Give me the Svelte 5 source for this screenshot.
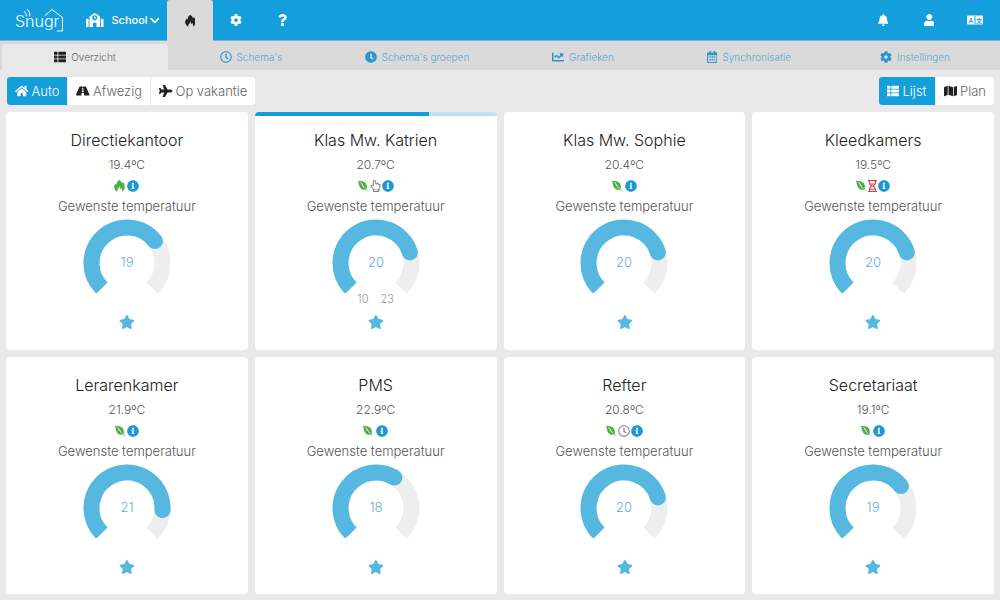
<script>
  const icons = {
    star: [576, 'M259.3 17.8L194 150.2 47.9 171.5c-26.2 3.8-36.7 36.1-17.7 54.6l105.7 103-25 145.5c-4.5 26.3 23.2 46 46.4 33.7L288 439.6l130.7 68.7c23.2 12.2 50.9-7.4 46.4-33.7l-25-145.5 105.7-103c19-18.5 8.5-50.8-17.7-54.6L382 150.2 316.7 17.8c-11.7-23.6-45.6-23.9-57.4 0z'],
    info: [512, 'M256 8C119.043 8 8 119.083 8 256c0 136.997 111.043 248 248 248s248-111.003 248-248C504 119.083 392.957 8 256 8zm0 110c23.196 0 42 18.804 42 42s-18.804 42-42 42-42-18.804-42-42 18.804-42 42-42zm56 254c0 6.627-5.373 12-12 12h-88c-6.627 0-12-5.373-12-12v-24c0-6.627 5.373-12 12-12h12v-64h-12c-6.627 0-12-5.373-12-12v-24c0-6.627 5.373-12 12-12h64c6.627 0 12 5.373 12 12v100h12c6.627 0 12 5.373 12 12v24z'],
    cog: [512, 'M487.4 315.7l-42.6-24.6c4.3-23.2 4.3-47 0-70.2l42.6-24.6c4.9-2.8 7.1-8.6 5.5-14-11.1-35.6-30-67.8-54.7-94.6-3.8-4.1-10-5.1-14.8-2.3L380.8 110c-17.9-15.4-38.5-27.3-60.8-35.1V25.8c0-5.6-3.9-10.5-9.4-11.7-36.7-8.2-74.3-7.8-109.2 0-5.5 1.2-9.4 6.1-9.4 11.7V75c-22.2 7.9-42.8 19.8-60.8 35.1L88.7 85.5c-4.9-2.8-11-1.9-14.8 2.3-24.7 26.7-43.6 58.9-54.7 94.6-1.7 5.4.6 11.2 5.5 14L67.3 221c-4.3 23.2-4.3 47 0 70.2l-42.6 24.6c-4.9 2.8-7.1 8.6-5.5 14 11.1 35.6 30 67.8 54.7 94.6 3.8 4.1 10 5.1 14.8 2.3l42.6-24.6c17.9 15.4 38.5 27.3 60.8 35.1v49.2c0 5.6 3.9 10.5 9.4 11.7 36.7 8.2 74.3 7.8 109.2 0 5.5-1.2 9.4-6.1 9.4-11.7v-49.2c22.2-7.9 42.8-19.8 60.8-35.1l42.6 24.6c4.9 2.8 11 1.9 14.8-2.3 24.7-26.7 43.6-58.9 54.7-94.6 1.5-5.5-.7-11.3-5.6-14.1zM256 336c-44.1 0-80-35.9-80-80s35.9-80 80-80 80 35.9 80 80-35.9 80-80 80z'],
    question: [384, 'M202.021 0C122.202 0 70.503 32.703 29.914 91.026c-7.363 10.58-5.093 25.086 5.178 32.874l43.138 32.709c10.373 7.865 25.132 6.026 33.253-4.148 25.049-31.381 43.63-49.449 82.757-49.449 30.764 0 68.816 19.799 68.816 49.631 0 22.552-18.617 34.134-48.993 51.164-35.423 19.86-82.299 44.576-82.299 106.405V320c0 13.255 10.745 24 24 24h72.471c13.255 0 24-10.745 24-24v-5.773c0-42.86 125.268-44.645 125.268-160.627C377.504 66.256 286.902 0 202.021 0zM192 373.459c-38.196 0-69.271 31.075-69.271 69.271 0 38.195 31.075 69.27 69.271 69.27s69.271-31.075 69.271-69.271-31.075-69.27-69.271-69.27z'],
    bell: [448, 'M224 512c35.32 0 63.97-28.65 63.97-64H160.03c0 35.35 28.65 64 63.97 64zm215.39-149.71c-19.32-20.76-55.47-51.99-55.47-154.29 0-77.7-54.48-139.9-127.94-155.16V32c0-17.67-14.32-32-31.98-32s-31.98 14.33-31.98 32v20.84C118.56 68.1 64.08 130.3 64.08 208c0 102.3-36.15 133.53-55.47 154.29-6 6.45-8.66 14.16-8.61 21.71.11 16.4 12.98 32 32.1 32h383.8c19.12 0 32-15.6 32.1-32 .05-7.55-2.61-15.27-8.61-21.71z'],
    user: [448, 'M224 256c70.7 0 128-57.3 128-128S294.7 0 224 0 96 57.3 96 128s57.3 128 128 128zm89.6 32h-16.7c-22.2 10.2-46.9 16-72.9 16s-50.6-5.8-72.9-16h-16.7C60.2 288 0 348.2 0 422.4V464c0 26.5 21.5 48 48 48h352c26.5 0 48-21.5 48-48v-41.6c0-74.2-60.2-134.4-134.4-134.4z'],
    clock: [512, 'M256 8C119 8 8 119 8 256s111 248 248 248 248-111 248-248S393 8 256 8zm0 448c-110.5 0-200-89.5-200-200S145.5 56 256 56s200 89.5 200 200-89.5 200-200 200zm61.8-104.4l-84.9-61.7c-3.1-2.3-4.9-5.9-4.9-9.7V116c0-6.6 5.4-12 12-12h32c6.6 0 12 5.4 12 12v141.7l66.8 48.6c5.4 3.9 6.5 11.4 2.6 16.8L334.6 349c-3.9 5.3-11.4 6.5-16.8 2.6z'],
    clockSolid: [512, 'M256,8C119,8,8,119,8,256S119,504,256,504,504,393,504,256,393,8,256,8Zm57.1,350.1L224.9,294c-3.1-2.3-4.9-5.9-4.9-9.7V116a12,12,0,0,1,12-12h48a12,12,0,0,1,12,12V250.7l62.3,45.3a12,12,0,0,1,2.6,16.8l-28.2,38.8A12,12,0,0,1,313.1,358.1Z'],
    chart: [512, 'M496 384H64V80c0-8.84-7.16-16-16-16H16C7.16 64 0 71.16 0 80v336c0 17.67 14.33 32 32 32h464c8.84 0 16-7.16 16-16v-32c0-8.84-7.16-16-16-16zM464 96H345.94c-21.38 0-32.09 25.85-16.97 40.97l32.4 32.4L288 242.75l-73.37-73.37c-12.5-12.5-32.76-12.5-45.25 0l-68.69 68.69c-6.25 6.25-6.25 16.38 0 22.63l22.62 22.62c6.25 6.25 16.38 6.25 22.63 0L192 237.25l73.37 73.37c12.5 12.5 32.76 12.5 45.25 0l96-96 32.4 32.4c15.12 15.12 40.97 4.41 40.97-16.97V112c.01-8.84-7.15-16-15.99-16z'],
    list: [512, 'M149.333 216v80c0 13.255-10.745 24-24 24H24c-13.255 0-24-10.745-24-24v-80c0-13.255 10.745-24 24-24h101.333c13.255 0 24 10.745 24 24zM0 376v80c0 13.255 10.745 24 24 24h101.333c13.255 0 24-10.745 24-24v-80c0-13.255-10.745-24-24-24H24c-13.255 0-24 10.745-24 24zM125.333 32H24C10.745 32 0 42.745 0 56v80c0 13.255 10.745 24 24 24h101.333c13.255 0 24-10.745 24-24V56c0-13.255-10.745-24-24-24zm80 448H488c13.255 0 24-10.745 24-24v-80c0-13.255-10.745-24-24-24H205.333c-13.255 0-24 10.745-24 24v80c0 13.255 10.745 24 24 24zm-24-424v80c0 13.255 10.745 24 24 24H488c13.255 0 24-10.745 24-24V56c0-13.255-10.745-24-24-24H205.333c-13.255 0-24 10.745-24 24zm24 264H488c13.255 0 24-10.745 24-24v-80c0-13.255-10.745-24-24-24H205.333c-13.255 0-24 10.745-24 24v80c0 13.255 10.745 24 24 24z'],
    home: [576, 'M280.37 148.26L96 300.11V464a16 16 0 0 0 16 16l112.06-.29a16 16 0 0 0 15.92-16V368a16 16 0 0 1 16-16h64a16 16 0 0 1 16 16v95.64a16 16 0 0 0 16 16.05L464 480a16 16 0 0 0 16-16V300L295.67 148.26a12.19 12.19 0 0 0-15.3 0zM571.6 251.47L488 182.56V44.05a12 12 0 0 0-12-12h-56a12 12 0 0 0-12 12v72.61L318.47 43a48 48 0 0 0-61 0L4.34 251.47a12 12 0 0 0-1.6 16.9l25.5 31A12 12 0 0 0 45.15 301l235.22-193.74a12.19 12.19 0 0 1 15.3 0L530.9 301a12 12 0 0 0 16.9-1.6l25.5-31a12 12 0 0 0-1.7-16.93z'],
    road: [576, 'M573.19 402.67l-139.79-320C428.43 71.29 417.6 64 405.68 64h-97.59l2.45 23.16c.5 4.72-3.21 8.84-7.96 8.84h-29.16c-4.75 0-8.46-4.12-7.96-8.84L267.91 64h-97.59c-11.93 0-22.76 7.29-27.73 18.67L2.8 402.67C-6.45 423.86 8.31 448 30.54 448h196.84l10.31-97.68c.86-8.14 7.72-14.32 15.91-14.32h68.8c8.19 0 15.05 6.18 15.91 14.32L348.62 448h196.84c22.23 0 36.99-24.14 27.73-45.33zM260.4 135.16a8 8 0 0 1 7.96-7.16h39.29c4.09 0 7.53 3.09 7.96 7.16l4.6 43.58c.75 7.09-4.81 13.26-11.93 13.26h-40.54c-7.13 0-12.68-6.17-11.93-13.26l4.59-43.58zM315.64 304h-55.29c-9.5 0-16.91-8.23-15.91-17.68l5.07-48c.86-8.14 7.72-14.32 15.91-14.32h45.15c8.19 0 15.05 6.18 15.91 14.32l5.07 48c1 9.45-6.41 17.68-15.91 17.68z'],
    plane: [576, 'M480 192H365.71L260.61 8.06A16.014 16.014 0 0 0 246.71 0h-65.5c-10.63 0-18.3 10.17-15.38 20.39L214.86 192H112l-43.2-57.6c-3.02-4.03-7.77-6.4-12.8-6.4H16.01C5.6 128-2.04 137.78.49 147.88L32 256 .49 364.12C-2.04 374.22 5.6 384 16.01 384H56c5.04 0 9.78-2.37 12.8-6.4L112 320h102.86l-49.03 171.6c-2.92 10.22 4.75 20.4 15.38 20.4h65.5c5.74 0 11.04-3.08 13.89-8.06L365.71 320H480c35.35 0 96-28.65 96-64s-60.65-64-96-64z'],
    map: [576, 'M0 117.66v346.32c0 11.32 11.43 19.06 21.94 14.86L160 416V32L20.12 87.95A32.006 32.006 0 0 0 0 117.66zM192 416l192 64V96L192 32v384zM554.06 33.16L416 96v384l139.88-55.95A31.996 31.996 0 0 0 576 394.34V48.02c0-11.32-11.43-19.06-21.94-14.86z'],
    chevron: [448, 'M207.029 381.476L12.686 187.132c-9.373-9.373-9.373-24.569 0-33.941l22.667-22.667c9.357-9.357 24.522-9.375 33.901-.04L224 284.505l154.745-154.021c9.379-9.335 24.544-9.317 33.901.04l22.667 22.667c9.373 9.373 9.373 24.569 0 33.941L240.971 381.476c-9.373 9.372-24.569 9.372-33.942 0z'],
    leaf: [448, 'M0 32c477.6 0 366.6 317.3 367.1 366.3L448 480h-26l-70.4-71.2c-39 4.2-124.4 34.5-214.4-37C47 300.3 52 214.7 0 32zm79.7 46c-49.7-23.5-5.2 9.2-5.2 9.2 45.2 31.2 66 73.7 90.2 119.9 31.5 60.2 79 139.7 144.2 167.7 65 28 34.2 12.5 6-8.5-28.2-21.2-68.2-87-91-130.2-31.7-60-61-118.6-144.2-158.1z'],
    flame: [464, 'M212 4c70 20 116 66 122 134 22-6 38-22 44-50 50 54 82 124 82 206 0 88-46 158-120 202 18-54 6-108-26-150-10 26-28 40-52 44 8-46-8-84-42-112-2 58-26 84-56 116-26 28-32 62-18 102C60 456 8 388 8 306c0-70 30-112 80-152 8 24 16 34 30 42C114 116 140 44 212 4z'],
    school: [640, 'M0 240c0-18 14-32 32-32h64v304H16c-9 0-16-7-16-16V240zm544-32h64c18 0 32 14 32 32v256c0 9-7 16-16 16h-80V208zM500 118L338 10c-11-7-25-7-36 0L140 118c-8 6-12 14-12 26v368h128V368c0-9 7-16 16-16h96c9 0 16 7 16 16v144h128V144c0-12-4-20-12-26zM320 272c-53 0-96-43-96-96s43-96 96-96 96 43 96 96-43 96-96 96zm-20-148h40v40h34v34h-74v-74z'],
    calendar: [448, 'M400 64h-48V12c0-7-5-12-12-12h-40c-7 0-12 5-12 12v52H160V12c0-7-5-12-12-12h-40c-7 0-12 5-12 12v52H48C21 64 0 85 0 112v352c0 27 21 48 48 48h352c27 0 48-21 48-48V112c0-27-21-48-48-48zm-6 400H54c-3 0-6-3-6-6V176h352v282c0 3-3 6-6 6zM96 224h64v64H96zm96 0h64v64h-64zm96 0h64v64h-64zM96 336h64v64H96zm96 0h64v64h-64zm96 0h64v64h-64z'],
    hourglass: [384, 'M0 0h384v48h-36c0 92-28 162-92 208 64 46 92 116 92 208h36v48H0v-48h36c0-92 28-162 92-208C64 210 36 140 36 48H0V0zm84 48c0 34 6 68 16 96h184c10-28 16-62 16-96H84zm108 230c-46 12-78 46-94 90h188c-16-44-48-78-94-90zM86 416c-2 16-2 32-2 48h216c0-16 0-32-2-48H86zm40-224c16 22 38 38 66 44 28-6 50-22 66-44H126z'],
    hand: [448, 'M184 0c-38 0-68 30-68 66v142c-20-10-46-14-68 0-36 22-40 62-14 94 34 42 84 66 94 110v66c0 20 14 34 34 34h206c20 0 34-14 34-34v-62c10-56 46-88 46-152v-42c0-46-36-78-78-72-14-22-42-32-68-26-12-10-28-16-48-16V66c0-36-32-66-70-66zm-20 66c0-28 44-28 44 0v124h22v-36c28-6 44 8 44 36h16c16-28 48-14 48 20h16c28-6 46 10 46 42v12c0 60-44 88-44 144H176c0-62-74-92-106-136-18-28 14-44 34-28l38 36h22V66zm18 376h154v24H182v-24z'],
  };

  const tabs = [
    ['list', 'Overzicht'],
    ['clock', "Schema's"],
    ['clockSolid', "Schema's groepen"],
    ['chart', 'Grafieken'],
    ['calendar', 'Synchronisatie'],
    ['cog', 'Instellingen'],
  ];
  const modes = [['home', 'Auto'], ['road', 'Afwezig'], ['plane', 'Op vakantie']];
  const views = [['list', 'Lijst'], ['map', 'Plan']];

  const MIN = 10;
  const MAX = 23;
  const rooms = [
    { name: 'Directiekantoor', temp: '19.4', target: 19, state: ['flame'] },
    { name: 'Klas Mw. Katrien', temp: '20.7', target: 20, state: ['leaf', 'hand'], progress: 72 },
    { name: 'Klas Mw. Sophie', temp: '20.4', target: 20, state: ['leaf'] },
    { name: 'Kleedkamers', temp: '19.5', target: 20, state: ['leaf', 'hourglass'] },
    { name: 'Lerarenkamer', temp: '21.9', target: 21, state: ['leaf'] },
    { name: 'PMS', temp: '22.9', target: 18, state: ['leaf'] },
    { name: 'Refter', temp: '20.8', target: 20, state: ['leaf', 'clock'] },
    { name: 'Secretariaat', temp: '19.1', target: 19, state: ['leaf'] },
  ];

  // Point on the dial's centre line, in degrees clockwise from the top.
  function point(deg) {
    const a = (deg * Math.PI) / 180;
    return [44 + 35.5 * Math.sin(a), 44 - 35.5 * Math.cos(a)];
  }
  function angle(value) {
    return -135 + (270 * (value - MIN)) / (MAX - MIN);
  }
  function arc(from, to) {
    const large = to - from > 180 ? 1 : 0;
    return `M${point(from).join(' ')}A35.5 35.5 0 ${large} 1 ${point(to).join(' ')}`;
  }
</script>

{#snippet icon(name)}
  <svg class="icon {name}" viewBox="0 0 {icons[name][0]} 512" aria-hidden="true"><path fill-rule="evenodd" d={icons[name][1]} /></svg>
{/snippet}

<div class="page">
  <header>
    <a class="logo" href="#home" aria-label="Snugr">
      <svg viewBox="0 0 50 26" aria-hidden="true">
        <text x="0" y="20">Snugr</text>
        <path d="M30 8.500 37 2.500 47.500 10.500V24H42.500" />
        <path d="M12.500 2.500q3 2.500 2.500 6.500M9.500 4.500q2 1.500 2 4.500" />
      </svg>
    </a>
    <button class="site">{@render icon('school')}<span>School</span>{@render icon('chevron')}</button>
    <nav class="main">
      <a class="active" href="#heating" aria-label="Verwarming">{@render icon('flame')}</a>
      <a href="#settings" aria-label="Instellingen">{@render icon('cog')}</a>
      <a href="#help" aria-label="Help">{@render icon('question')}</a>
    </nav>
    <div class="main end">
      <button aria-label="Meldingen">{@render icon('bell')}</button>
      <button aria-label="Account">{@render icon('user')}</button>
      <button aria-label="Taal">
        <svg class="lang" viewBox="0 0 16 10" aria-hidden="true">
          <rect width="16" height="9" y=".5" rx="1" />
          <path d="M8 1v8" />
          <text x="4" y="7.500">A</text>
          <text x="12" y="7.500">文</text>
        </svg>
      </button>
    </div>
  </header>

  <nav class="tabs">
    {#each tabs as [glyph, label], i}
      <a href="#tab{i}" class:active={i === 0}>{@render icon(glyph)}{label}</a>
    {/each}
  </nav>

  <div class="toolbar">
    <div class="group">
      {#each modes as [glyph, label], i}
        <button class:on={i === 0}>{@render icon(glyph)}{label}</button>
      {/each}
    </div>
    <div class="group">
      {#each views as [glyph, label], i}
        <button class:on={i === 0}>{@render icon(glyph)}{label}</button>
      {/each}
    </div>
  </div>

  <main>
    {#each rooms as room}
      <article>
        <div class="strip" class:running={room.progress}>
          {#if room.progress}<div style="width: {room.progress}%"></div>{/if}
        </div>
        <h2>{room.name}</h2>
        <p class="temp">{room.temp}ºC</p>
        <div class="state">
          {#each room.state as s}{@render icon(s)}{/each}
          {@render icon('info')}
        </div>
        <p class="label">Gewenste temperatuur</p>
        <svg class="dial" viewBox="0 0 88 74" role="img" aria-label="Gewenste temperatuur {room.target}">
          <path class="track" d={arc(-135, 135)} />
          <path class="value" d={arc(-135, angle(room.target))} />
          <circle cx={point(angle(room.target))[0]} cy={point(angle(room.target))[1]} r="8" />
          <text x="44" y="48">{room.target}</text>
        </svg>
        <div class="range">
          {#if room.progress}<span>{MIN}</span><span>{MAX}</span>{/if}
        </div>
        <button class="fav" aria-label="Favoriet">{@render icon('star')}</button>
      </article>
    {/each}
  </main>
</div>

<style>
  :global(body) { margin: 0; }
  .page {
    min-height: 100vh;
    display: flex;
    flex-direction: column;
    background: #e9e9e9;
    color: #555;
    font-family: Inter, "Noto Sans CJK SC", sans-serif;
    font-weight: 300;
  }
  button {
    border: 0;
    padding: 0;
    margin: 0;
    background: none;
    color: inherit;
    font: inherit;
    cursor: pointer;
  }
  a { color: inherit; text-decoration: none; }
  .icon { display: block; flex: none; height: 12px; fill: currentColor; }

  header {
    display: flex;
    height: 40px;
    background: #149edb;
    border-bottom: 1px solid #6fb4d9;
    color: #fff;
  }
  .logo { display: flex; align-items: center; padding: 0 21px 0 15px; }
  .logo svg { width: 50px; height: 26px; fill: none; stroke: #fff; stroke-linecap: round; stroke-linejoin: round; }
  .logo text { fill: #fff; stroke: none; font-size: 16px; font-weight: 300; }
  .site { display: flex; align-items: center; font-size: 11px; font-weight: 500; width: 81px; gap: 2px; }
  .site span { margin-left: 6px; }
  .site .school { height: 14px; }
  .site .chevron { height: 11px; }
  .main { display: flex; }
  .main > * { width: 46px; display: flex; align-items: center; justify-content: center; }
  .main .active { background: #dadada; color: #222; margin-bottom: -1px; border-radius: 3px 3px 0 0; }
  .end { margin-left: auto; padding-right: 2px; }
  .lang { width: 16px; height: 10px; fill: #fff; }
  .lang path { stroke: #149edb; }
  .lang text { fill: #149edb; font-size: 6px; font-weight: 600; text-anchor: middle; }

  .tabs { display: flex; height: 26px; padding: 3px 2px 0; background: #dadada; color: #5ba6d3; font-size: 10px; }
  .tabs a { flex: 1; display: flex; align-items: center; justify-content: center; gap: 5px; border-radius: 4px 4px 0 0; }
  .tabs .icon { color: #2a96d0; }
  .tabs .active { background: #e9e9e9; color: #666; }
  .tabs .active .icon { color: #222; }

  .toolbar { display: flex; justify-content: space-between; padding: 7px 6px 7px 7px; }
  .group { display: flex; gap: 1px; border-radius: 3px; overflow: hidden; }
  .group button { display: flex; align-items: center; gap: 3px; height: 28px; padding: 0 8px; background: #fff; color: #666; font-size: 13px; }
  .group .icon { color: #222; }
  .group .on, .group .on .icon { background: #149edb; color: #fff; }

  main {
    flex: 1;
    display: grid;
    grid-template-columns: repeat(4, 1fr);
    grid-auto-rows: 1fr;
    gap: 7px;
    padding: 0 6px 6px;
  }
  article { display: flex; flex-direction: column; align-items: center; background: #fff; border-radius: 4px; overflow: hidden; }
  .strip { align-self: stretch; height: 4px; }
  .strip div { height: 100%; background: #149edb; }
  .running { background: #c0e2f1; }
  h2 { margin: 14px 0 7px; font-size: 16px; line-height: 20px; font-weight: 300; color: #222; }
  p { margin: 0; line-height: 16px; }
  .temp { font-size: 12px; }
  .label { font-size: 13px; }
  .state { display: flex; align-items: center; gap: 1px; height: 14px; margin: 6px 0 5px; }
  .state .leaf, .state .flame { color: #4fae46; }
  .state .leaf, .state .flame { margin-right: 1px; }
  .state .hand, .state .clock { color: #888; }
  .state .hourglass { color: #d9413f; }
  .state .info { color: #1b98d5; }
  .dial { width: 88px; height: 74px; margin-top: 5px; fill: none; stroke-width: 16px; }
  .track { stroke: #eee; }
  .value { stroke: #56b8e1; }
  .dial circle { fill: #56b8e1; }
  .dial text { fill: #5fb0dd; font-size: 13px; text-anchor: middle; }
  .range { display: flex; gap: 12px; height: 12px; font-size: 11px; line-height: 12px; color: #999; }
  .fav { margin-top: 10px; color: #56b8e1; }
  .fav .icon { height: 14px; }
</style>
